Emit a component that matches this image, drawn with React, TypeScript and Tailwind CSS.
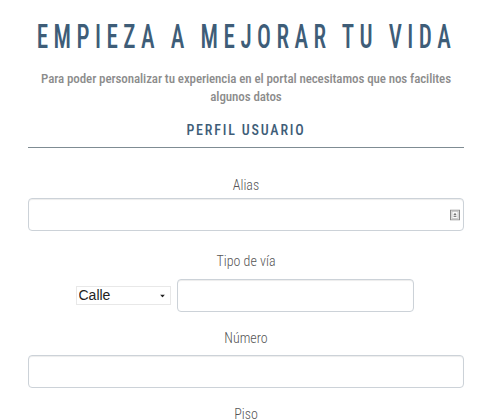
const cond = "font-['Roboto_Condensed','Roboto',sans-serif]";

function Label({ children, className = "" }: { children: React.ReactNode; className?: string }) {
  return (
    <div className={`${cond} text-center text-[14px] leading-5 font-light text-[#555] ${className}`}>
      {children}
    </div>
  );
}

function TextInput({ icon = false }: { icon?: boolean }) {
  return (
    <div className="relative w-full">
      <input
        type="text"
        className="block h-[33px] w-full rounded-[4px] border border-[#ccd2d8] bg-white px-3 shadow-[inset_0_1px_1px_rgba(0,0,0,0.075)] outline-none"
      />
      {icon && (
        <svg
          className="absolute right-[4px] top-1/2 -translate-y-1/2"
          width="10"
          height="11"
          viewBox="0 0 10 11"
        >
          <rect x="0.5" y="0.5" width="9" height="10" fill="#e6e6e6" stroke="#8a8a8a" />
          <rect x="2" y="2" width="6" height="7" fill="#fafafa" stroke="#b5b5b5" strokeWidth="0.6" />
          <path d="M5 3.2 L6.6 5.4 H3.4 Z" fill="#777" />
          <rect x="3.6" y="6.2" width="2.8" height="1.2" fill="#777" />
        </svg>
      )}
    </div>
  );
}

export default function App() {
  return (
    <div className="min-h-screen bg-white pl-[28px] pr-[20px]">
      {/* Heading */}
      <div className="flex justify-center overflow-visible pt-[19px]">
        <h1
          className={`${cond} origin-center scale-x-[0.68] whitespace-nowrap text-[34px] leading-none font-medium tracking-[8px] text-[#3e5d78]`}
        >
          EMPIEZA A MEJORAR TU VIDA
        </h1>
      </div>
      <p className={`${cond} mt-[17px] text-center text-[13px] leading-[18px] font-medium tracking-[-0.1px] text-[#8c8c8c]`}>
        Para poder personalizar tu experiencia en el portal necesitamos que nos facilites algunos datos
      </p>
      <h2 className={`${cond} mt-[14px] text-center text-[14px] leading-5 font-medium tracking-[0.13em] text-[#3e5d78]`}>
        PERFIL USUARIO
      </h2>
      <div className="mt-[7px] h-px bg-[#7f8c93]" />

      {/* Form */}
      <form className="flex flex-col">
        <Label className="mt-[27px] mb-[3px]">Alias</Label>
        <TextInput icon />

        <Label className="mt-5 mb-2">Tipo de vía</Label>
        <div className="flex items-center justify-center gap-[6px] pr-[3px]">
          <div className="relative">
            <select className="block h-[19px] w-[95px] appearance-none border border-[#e8e8e8] bg-white pl-[2px] font-['Liberation_Sans',Arial,sans-serif] text-[14px] leading-[17px] text-[#222] outline-none">
              <option>Calle</option>
              <option>Avenida</option>
              <option>Plaza</option>
            </select>
            <svg
              className="pointer-events-none absolute right-[6px] top-1/2 -translate-y-1/2"
              width="5"
              height="3"
              viewBox="0 0 5 3"
            >
              <path d="M0 0 H5 L2.5 3 Z" fill="#222" />
            </svg>
          </div>
          <div className="w-[237px]">
            <TextInput />
          </div>
        </div>

        <Label className="mt-4 mb-[7px]">Número</Label>
        <TextInput />

        <Label className="mt-4">Piso</Label>
        <div className="h-10" />
      </form>
    </div>
  );
}
